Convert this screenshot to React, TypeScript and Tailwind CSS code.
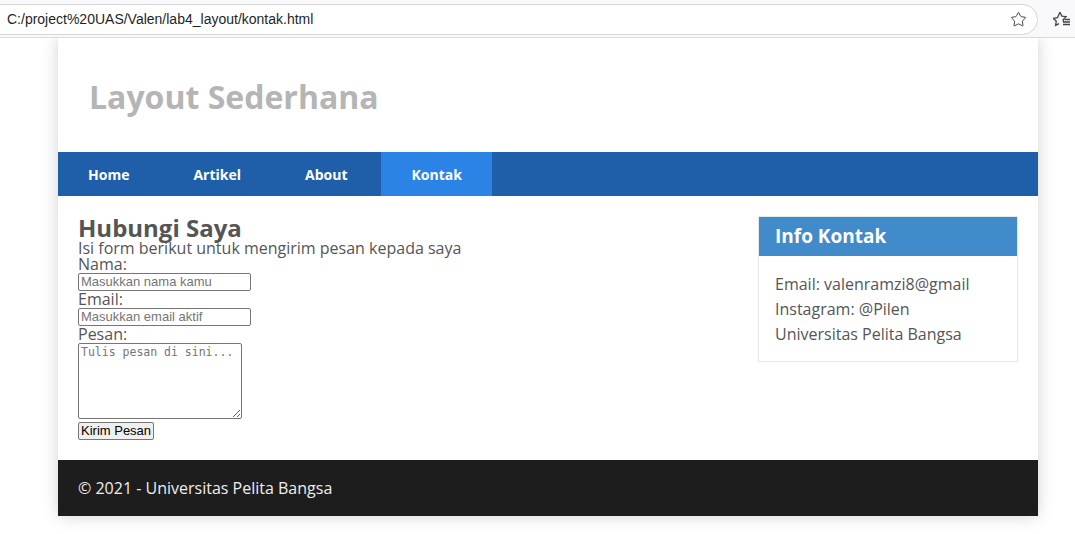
import { Star } from "lucide-react";

const navItems = ["Home", "Artikel", "About", "Kontak"];

function BrowserBar() {
  return (
    <div className="h-[38px] bg-[#f9f9fb] border-b border-[#dadada] relative overflow-hidden">
      <div className="absolute left-[-30px] top-[4px] w-[1068px] h-[31px] rounded-full border border-[#d6d6d6] bg-white flex items-center pl-[36px] pr-[10px]">
        <span className="flex-1 text-[14px] text-[#1f1f1f] font-['Liberation_Sans',sans-serif]">
          C:/project%20UAS/Valen/lab4_layout/kontak.html
        </span>
        <Star size={17} strokeWidth={1.4} className="text-[#444]" />
      </div>
      <svg
        className="absolute left-[1053px] top-[11px]"
        width="18"
        height="16"
        viewBox="0 0 18 16"
        fill="none"
        stroke="#444"
        strokeWidth="1.3"
      >
        <path d="M7 1.2l1.9 3.9 4.2.6-3 2.9.5 2.4M6 12.6l-3.4 1.8.7-4.2-3-2.9 4.2-.6L6.9 1.2" />
        <path d="M10 11h7M10 13.5h7M11.5 8.5h5.5" />
      </svg>
    </div>
  );
}

export default function App() {
  return (
    <div className="bg-white min-h-[534px] font-['Open_Sans',sans-serif]">
      <BrowserBar />
      <div className="w-[980px] ml-[58px] bg-white shadow-[0_0_15px_rgba(0,0,0,0.18)]">
        <header className="h-[114px] flex items-center px-[31px]">
          <h1 className="text-[32px] font-bold text-[#b5b5b5] mt-[4px]">Layout Sederhana</h1>
        </header>

        <nav className="h-[44px] bg-[#1f5faa] flex gap-[4px]">
          {navItems.map((item) => (
            <a
              key={item}
              className={
                item === "Kontak"
                  ? "px-[30px] flex items-center text-[14px] font-bold text-white bg-[#2b83e6]"
                  : "px-[30px] flex items-center text-[14px] font-bold text-white"
              }
            >
              {item}
            </a>
          ))}
        </nav>

        <div className="flex p-[20px]">
          <section className="flex-1 text-[#555]">
            <h2 className="text-[24px] font-bold leading-[24px]">Hubungi Saya</h2>
            <p className="text-[16px] leading-[16px]">Isi form berikut untuk mengirim pesan kepada saya</p>
            <form className="flex flex-col items-start">
              <label className="text-[16px] leading-[17px]">Nama:</label>
              <input
                placeholder="Masukkan nama kamu"
                className="w-[173px] h-[18px] border border-[#767676] rounded-[2px] px-[2px] text-[13px] font-['Liberation_Sans',sans-serif] placeholder:text-[#757575]"
              />
              <label className="text-[16px] leading-[17px]">Email:</label>
              <input
                placeholder="Masukkan email aktif"
                className="w-[173px] h-[18px] border border-[#767676] rounded-[2px] px-[2px] text-[13px] font-['Liberation_Sans',sans-serif] placeholder:text-[#757575]"
              />
              <label className="text-[16px] leading-[17px]">Pesan:</label>
              <textarea
                placeholder="Tulis pesan di sini..."
                className="w-[164px] h-[76px] border border-[#767676] rounded-[2px] px-[2px] py-[1px] text-[11.5px] leading-[15px] font-['DejaVu_Sans_Mono',monospace] placeholder:text-[#757575]"
              />
              <button
                type="button"
                className="mt-[3px] h-[18px] px-[2px] bg-[#efefef] border border-[#767676] rounded-[2px] text-[13px] leading-[14px] text-black font-['Liberation_Sans',sans-serif]"
              >
                Kirim Pesan
              </button>
            </form>
          </section>

          <aside className="w-[260px] self-start border border-[#e8e8e8]">
            <div className="h-[39px] bg-[#428bca] flex items-center px-[16px]">
              <h3 className="text-[19px] font-bold text-white">Info Kontak</h3>
            </div>
            <div className="px-[16px] pt-[16px] pb-[14px] text-[16px] leading-[25px] text-[#555]">
              <p>Email: valenramzi8@gmail</p>
              <p>Instagram: @Pilen</p>
              <p>Universitas Pelita Bangsa</p>
            </div>
          </aside>
        </div>

        <footer className="h-[56px] bg-[#1d1d1d] flex items-center px-[20px]">
          <p className="text-[16px] text-[#eee]">© 2021 - Universitas Pelita Bangsa</p>
        </footer>
      </div>
    </div>
  );
}
